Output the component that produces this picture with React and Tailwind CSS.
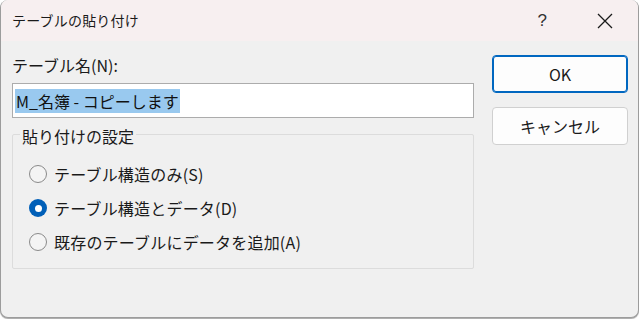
import React, { useState } from 'react';

const FONT = { fontFamily: '"Noto Sans CJK JP", "Liberation Sans", sans-serif' };

function Radio({ checked, label, onSelect }) {
  return (
    <button onClick={onSelect} className="flex items-center gap-[7px] h-[34px] text-left">
      {checked ? (
        <span className="w-[18px] h-[18px] rounded-full bg-[#005fb8] flex items-center justify-center shrink-0">
          <span className="w-[7px] h-[7px] rounded-full bg-white" />
        </span>
      ) : (
        <span className="w-[18px] h-[18px] rounded-full border border-[#8a8a8a] bg-[#f4f4f4] shrink-0" />
      )}
      <span className="text-[16px] text-[#1a1a1a] leading-none tracking-[0.2px]">{label}</span>
    </button>
  );
}

export default function App() {
  const [mode, setMode] = useState(1);
  const options = ['テーブル構造のみ(S)', 'テーブル構造とデータ(D)', '既存のテーブルにデータを追加(A)'];

  return (
    <div className="w-[639px] h-[319px] bg-white overflow-hidden" style={FONT}>
      <div className="w-[639px] h-[318px] rounded-[8px] border border-t-0 border-[#9c9c9c] bg-[#f0f0f0] overflow-hidden flex flex-col shadow-[0_1px_1px_rgba(0,0,0,0.35)]">
        {/* Title bar */}
        <div className="h-[41px] bg-[#f7eff0] flex items-center pl-[11px] shrink-0">
          <span className="text-[14px] text-[#1a1a1a] flex-1 tracking-[0.2px]">テーブルの貼り付け</span>
          <span className="text-[17px] text-[#333] mr-[50px] font-light" style={{ fontFamily: '"Liberation Sans", sans-serif' }}>?</span>
          <svg width="16" height="16" viewBox="0 0 16 16" className="mr-[25px]">
            <path d="M1 1 L15 15 M15 1 L1 15" stroke="#1a1a1a" strokeWidth="1.3" />
          </svg>
        </div>

        {/* Body */}
        <div className="flex pl-[11px] pr-[10px] pt-[14px] gap-[18px]">
          <div className="w-[462px] flex flex-col">
            <div className="text-[16px] text-[#1a1a1a] leading-[20px] h-[20px]">テーブル名(N):</div>
            <div className="mt-[8px] h-[35px] bg-white border border-[#acacac] flex items-center pl-[2px]">
              <span className="bg-[#99c9ef] text-[16px] text-[#111] leading-[24px] px-px">M_名簿 - コピーします</span>
            </div>
            <div className="mt-[8px] relative">
              <span className="absolute left-[8px] top-0 px-[2px] bg-[#f0f0f0] text-[16px] text-[#1a1a1a] leading-[20px]">貼り付けの設定</span>
              <div className="mt-[8px] h-[135px] border border-[#dcdcdc] rounded-[2px] pt-[22px] pl-[16px] flex flex-col">
                {options.map((o, i) => (
                  <Radio key={i} label={o} checked={mode === i} onSelect={() => setMode(i)} />
                ))}
              </div>
            </div>
          </div>

          <div className="w-[136px] flex flex-col gap-[14px]">
            <button className="h-[38px] rounded-[4px] border border-[#0067c0] bg-[#fdfdfd] text-[16px] text-[#1a1a1a] shadow-[inset_0_0_0_1px_#0067c0]">OK</button>
            <button className="h-[38px] rounded-[4px] border border-[#d0d0d0] bg-[#fdfdfd] text-[16px] text-[#1a1a1a]">キャンセル</button>
          </div>
        </div>
      </div>
    </div>
  );
}
